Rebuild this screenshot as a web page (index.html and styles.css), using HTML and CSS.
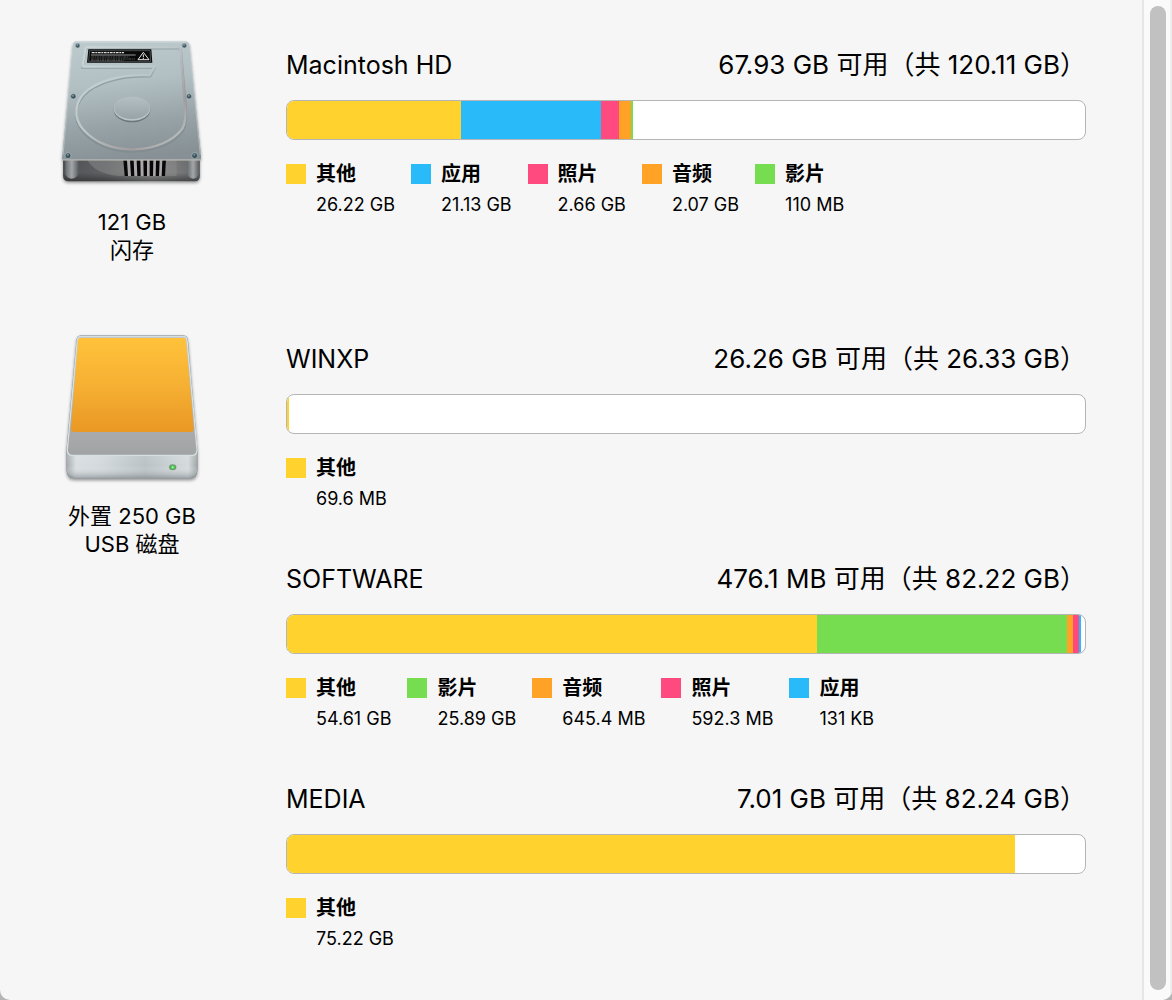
FILE: index.html
```html
<!DOCTYPE html>
<html lang="zh-CN">
<head>
    <meta charset="UTF-8">
    <meta name="viewport" content="width=device-width, initial-scale=1.0">
    <title>储存空间</title>
    <link rel="stylesheet" href="styles.css">
</head>
<body>

<div class="window">
    <main class="content">

        <section class="drive">
            <div class="drive-info">
                <svg class="drive-icon" viewBox="0 0 492 492" aria-hidden="true">
                    <defs>
                        <linearGradient id="hdTop" x1="0.3" y1="0" x2="0.45" y2="1">
                            <stop offset="0" stop-color="#bccace"/>
                            <stop offset="0.35" stop-color="#b2c0c4"/>
                            <stop offset="0.7" stop-color="#98a3a7"/>
                            <stop offset="1" stop-color="#879195"/>
                        </linearGradient>
                        <linearGradient id="hdFront" x1="0" y1="0" x2="1" y2="0">
                            <stop offset="0" stop-color="#55585b"/>
                            <stop offset="0.3" stop-color="#66696b"/>
                            <stop offset="0.65" stop-color="#9a9a9a"/>
                            <stop offset="1" stop-color="#6c6f72"/>
                        </linearGradient>
                        <linearGradient id="hdFrontShade" x1="0" y1="0" x2="0" y2="1">
                            <stop offset="0" stop-color="#222" stop-opacity="0.15"/>
                            <stop offset="0.6" stop-color="#222" stop-opacity="0.1"/>
                            <stop offset="1" stop-color="#222" stop-opacity="0.6"/>
                        </linearGradient>
                        <linearGradient id="hdPost" x1="0" y1="0" x2="1" y2="0">
                            <stop offset="0" stop-color="#696d70"/>
                            <stop offset="0.5" stop-color="#a3a7aa"/>
                            <stop offset="1" stop-color="#5c6063"/>
                        </linearGradient>
                        <linearGradient id="hdRidge" x1="0" y1="0" x2="1" y2="1">
                            <stop offset="0" stop-color="#ccd7da"/>
                            <stop offset="0.45" stop-color="#bcc7ca"/>
                            <stop offset="0.75" stop-color="#a39c9e"/>
                            <stop offset="1" stop-color="#c2cdd0"/>
                        </linearGradient>
                        <linearGradient id="hdHub" x1="0" y1="0" x2="0" y2="1">
                            <stop offset="0" stop-color="#b3bfc2"/>
                            <stop offset="1" stop-color="#98a3a7"/>
                        </linearGradient>
                        <filter id="shadow" x="-10%" y="-10%" width="120%" height="125%">
                            <feDropShadow dx="0" dy="5" stdDeviation="5" flood-color="#000" flood-opacity="0.4"/>
                        </filter>
                    </defs>
                    <g filter="url(#shadow)">
                        <path d="M39 388 H450 V436 Q450 454 434 454 H56 Q39 454 39 436 Z" fill="url(#hdFront)"/>
                        <path d="M80 34 H404 Q417 34 419 46 L453 374 Q454 390 450 390 H39 Q35 389 37 374 L68 46 Q70 34 80 34 Z" fill="url(#hdTop)"/>
                    </g>
                    <!-- front side with the vents -->
                    <path d="M39 390 H450 V436 Q450 454 434 454 H56 Q39 454 39 436 Z" fill="url(#hdFrontShade)"/>
                    <path d="M112 391 Q135 431 205 438 H380 V391 Z" fill="#898989" opacity="0.5"/>
                    <path d="M46 391 H85 V432 Q78 446 65 446 Q52 446 46 432 Z" fill="url(#hdPost)"/>
                    <path d="M412 391 H447 V432 Q441 446 430 446 Q418 446 412 432 Z" fill="url(#hdPost)"/>
                    <path d="M221 391 H348 L344 438 H225 Z" fill="#aaa8a8"/>
                    <path d="M220 391 h11 l3 47 h-10 Z M240 391 h11 l2 47 h-10 Z M260 391 h11 l1 47 h-10 Z M280 391 h11 v47 h-10 Z M299 391 h11 l-1 47 h-10 Z M318 391 h11 l-2 47 h-10 Z M337 391 h11 l-3 47 h-10 Z" fill="#080808"/>
                    <path d="M39 390 H451" stroke="#c8c6be" stroke-width="3"/>
                    <path d="M78 36 H406" stroke="#d9e3e6" stroke-width="2"/>
                    <path d="M69 48 L39 374 M418 48 L451 374" stroke="#c0cbcf" stroke-width="2" fill="none"/>
                    <!-- raised platter cover -->
                    <path d="M107 55 H389 M107 55 L97 113 H314 L301 139 C225 136 157 153 116 183 C74 215 66 268 99 305 C133 344 188 366 248 365 C317 364 373 340 399 302 C411 282 409 252 407 227 L392 55" fill="none" stroke="#7c888c" stroke-width="7" stroke-linejoin="round" opacity="0.6"/>
                    <path d="M107 52 H391 M97 110 H314 L299 136 C224 132 156 149 115 179 C73 211 67 262 101 300 C136 339 190 359 248 358 C315 357 370 333 397 296 C409 277 407 247 405 224 L391 52 M107 52 L97 110" fill="none" stroke="url(#hdRidge)" stroke-width="7" stroke-linejoin="round"/>
                    <ellipse cx="246" cy="240" rx="55" ry="37" fill="#6c777b"/>
                    <ellipse cx="246" cy="236" rx="55" ry="36" fill="#b9c4c7"/>
                    <ellipse cx="246" cy="234" rx="53" ry="33" fill="url(#hdHub)"/>
                    <!-- warning label -->
                    <path d="M115 58 H304 L307 98 H111 Z" fill="#080909"/>
                    <path d="M119 62 H300 L302 94 H116 Z" fill="none" stroke="#666" stroke-width="2"/>
                    <path d="M125 68 H222" stroke="#ddd" stroke-width="4" stroke-dasharray="9 2 5 2"/>
                    <path d="M123 75 H257" stroke="#ddd" stroke-width="2"/>
                    <path d="M124 81 H238 M123 87 H255 M123 91 H220" stroke="#777" stroke-width="2" stroke-dasharray="8 2 4 2"/>
                    <path d="M280 67 L264 89 H297 Z" fill="none" stroke="#e5e5e5" stroke-width="3"/>
                    <path d="M280 73 V82 M280 84 V87" stroke="#e5e5e5" stroke-width="3"/>
                    <!-- screws -->
                    <g fill="#3d535c" stroke="#b4c1c6" stroke-width="2">
                        <circle cx="83" cy="47" r="7"/>
                        <circle cx="403" cy="47" r="7"/>
                        <circle cx="70" cy="199" r="8"/>
                        <circle cx="417" cy="199" r="8"/>
                        <circle cx="54" cy="377" r="9"/>
                        <circle cx="434" cy="377" r="9"/>
                    </g>
                    <g fill="#7f979f">
                        <circle cx="82" cy="45" r="3"/>
                        <circle cx="402" cy="45" r="3"/>
                        <circle cx="69" cy="197" r="3"/>
                        <circle cx="416" cy="197" r="3"/>
                        <circle cx="53" cy="374" r="3"/>
                        <circle cx="433" cy="374" r="3"/>
                    </g>
                </svg>
                <p class="drive-label">121 GB<br>闪存</p>
            </div>

            <div class="volumes">
                <article class="volume">
                    <header class="volume-header">
                        <h2>Macintosh HD</h2>
                        <p>67.93 GB 可用（共 120.11 GB）</p>
                    </header>
                    <div class="bar">
                        <span class="other" style="width: 21.83%"></span>
                        <span class="apps" style="width: 17.54%"></span>
                        <span class="photos" style="width: 2.26%"></span>
                        <span class="audio" style="width: 1.5%"></span>
                        <span class="movies" style="width: 0.09%"></span>
                    </div>
                    <ul class="legend">
                        <li><i class="swatch other"></i><b>其他</b><span>26.22 GB</span></li>
                        <li><i class="swatch apps"></i><b>应用</b><span>21.13 GB</span></li>
                        <li><i class="swatch photos"></i><b>照片</b><span>2.66 GB</span></li>
                        <li><i class="swatch audio"></i><b>音频</b><span>2.07 GB</span></li>
                        <li><i class="swatch movies"></i><b>影片</b><span>110 MB</span></li>
                    </ul>
                </article>
            </div>
        </section>

        <section class="drive">
            <div class="drive-info">
                <svg class="drive-icon" viewBox="0 -3 492 492" aria-hidden="true">
                    <defs>
                        <linearGradient id="exTop" x1="0" y1="0" x2="0" y2="1">
                            <stop offset="0" stop-color="#c3c8ca"/>
                            <stop offset="0.8" stop-color="#a9abad"/>
                            <stop offset="1" stop-color="#a0a2a3"/>
                        </linearGradient>
                        <linearGradient id="exLabel" x1="0" y1="0" x2="0" y2="1">
                            <stop offset="0" stop-color="#ffc23a"/>
                            <stop offset="0.5" stop-color="#f6b033"/>
                            <stop offset="1" stop-color="#e99824"/>
                        </linearGradient>
                        <linearGradient id="exFront" x1="0" y1="0" x2="1" y2="0">
                            <stop offset="0" stop-color="#a2a9ac"/>
                            <stop offset="0.07" stop-color="#d8dee0"/>
                            <stop offset="0.25" stop-color="#d3d9dc"/>
                            <stop offset="0.6" stop-color="#bac2c6"/>
                            <stop offset="0.93" stop-color="#d5dbdd"/>
                            <stop offset="1" stop-color="#9da4a7"/>
                        </linearGradient>
                        <linearGradient id="exShade" x1="0" y1="0" x2="0" y2="1">
                            <stop offset="0" stop-color="#fff" stop-opacity="0.15"/>
                            <stop offset="0.6" stop-color="#fff" stop-opacity="0"/>
                            <stop offset="1" stop-color="#6f777b" stop-opacity="0.5"/>
                        </linearGradient>
                    </defs>
                    <path d="M92 31 H401 Q412 32 414 45 L443 374 V434 Q442 461 420 461 H74 Q50 461 49 434 V374 L79 45 Q81 32 92 31 Z" fill="#8c9396" filter="url(#shadow)"/>
                    <path d="M50 370 V432 Q52 458 75 458 H419 Q440 458 442 432 V370 Z" fill="url(#exFront)"/>
                    <path d="M50 370 V432 Q52 458 75 458 H419 Q440 458 442 432 V370 Z" fill="url(#exShade)"/>
                    <path d="M93 34 H400 Q409 34 411 45 L441 374 Q441 390 428 391 H65 Q52 390 52 374 L82 45 Q84 34 93 34 Z" fill="url(#exTop)" stroke="#d6e0e3" stroke-width="4"/>
                    <path d="M91 39 H400 Q407 39 408 46 L431 308 Q432 321 422 321 H72 Q62 321 63 308 L84 46 Q85 39 91 39 Z" fill="url(#exLabel)"/>
                    <ellipse cx="368" cy="427" rx="11" ry="9" fill="#6f9c73"/>
                    <circle cx="368" cy="427" r="6" fill="#3ed442"/>
                    <circle cx="368" cy="427" r="3" fill="#b5f7ae"/>
                </svg>
                <p class="drive-label">外置 250 GB<br>USB 磁盘</p>
            </div>

            <div class="volumes">
                <article class="volume">
                    <header class="volume-header">
                        <h2>WINXP</h2>
                        <p>26.26 GB 可用（共 26.33 GB）</p>
                    </header>
                    <div class="bar">
                        <span class="other" style="width: 0.26%"></span>
                    </div>
                    <ul class="legend">
                        <li><i class="swatch other"></i><b>其他</b><span>69.6 MB</span></li>
                    </ul>
                </article>

                <article class="volume">
                    <header class="volume-header">
                        <h2>SOFTWARE</h2>
                        <p>476.1 MB 可用（共 82.22 GB）</p>
                    </header>
                    <div class="bar">
                        <span class="other" style="width: 66.42%"></span>
                        <span class="movies" style="width: 31.33%"></span>
                        <span class="audio" style="width: 0.75%"></span>
                        <span class="photos" style="width: 0.75%"></span>
                        <span class="apps" style="width: 0.01%"></span>
                    </div>
                    <ul class="legend">
                        <li><i class="swatch other"></i><b>其他</b><span>54.61 GB</span></li>
                        <li><i class="swatch movies"></i><b>影片</b><span>25.89 GB</span></li>
                        <li><i class="swatch audio"></i><b>音频</b><span>645.4 MB</span></li>
                        <li><i class="swatch photos"></i><b>照片</b><span>592.3 MB</span></li>
                        <li><i class="swatch apps"></i><b>应用</b><span>131 KB</span></li>
                    </ul>
                </article>

                <article class="volume">
                    <header class="volume-header">
                        <h2>MEDIA</h2>
                        <p>7.01 GB 可用（共 82.24 GB）</p>
                    </header>
                    <div class="bar">
                        <span class="other" style="width: 91.23%"></span>
                    </div>
                    <ul class="legend">
                        <li><i class="swatch other"></i><b>其他</b><span>75.22 GB</span></li>
                    </ul>
                </article>
            </div>
        </section>

    </main>

    <div class="scrollbar"><div class="thumb"></div></div>
</div>

</body>
</html>
```
FILE: styles.css
```css
* {
    box-sizing: border-box;
}

body {
    margin: 0;
    background-color: #b4b4b4;
    color: #000;
    font-family: Inter, "Noto Sans CJK SC", sans-serif;
}

h2, p, ul {
    margin: 0;
    padding: 0;
    font-weight: normal;
}

.window {
    display: flex;
    min-height: 100vh;
    background-color: #f6f6f6;
    border-radius: 0 0 10px 10px;
    overflow: hidden;
}

.content {
    flex: 1;
    display: flex;
    flex-direction: column;
    gap: 60px;
    padding: 30px 56px 30px 32px;
}

.drive {
    display: grid;
    grid-template-columns: 200px 1fr;
    column-gap: 54px;
}

.drive-info {
    text-align: center;
}

.drive-icon {
    display: block;
    width: 164px;
    height: 164px;
    margin: 0 auto 14px;
}

.drive-label {
    font-size: 22px;
    line-height: 28px;
}

.volumes {
    display: flex;
    flex-direction: column;
    gap: 48px;
    padding-top: 20px;
}

.volume-header {
    display: flex;
    justify-content: space-between;
    margin-bottom: 20px;
    line-height: 30px;
}

.volume-header h2 {
    font-size: 25px;
}

.volume-header p {
    font-size: 26px;
}

.bar {
    display: flex;
    height: 40px;
    border: 1px solid #b5b5b5;
    border-radius: 8px;
    background-color: #fff;
    overflow: hidden;
}

.bar span {
    min-width: 2px;
}

.legend {
    display: flex;
    gap: 16px;
    margin-top: 20px;
    list-style: none;
}

.legend li {
    display: grid;
    grid-template-columns: 20px auto;
    grid-template-rows: 28px 34px;
    column-gap: 10px;
    align-items: center;
}

.legend b {
    font-size: 20px;
    line-height: 28px;
}

.legend span {
    grid-column: 2;
    font-size: 18px;
    line-height: 34px;
}

.swatch {
    width: 20px;
    height: 20px;
}

.other { background-color: #ffd22e; }
.apps { background-color: #29bbf9; }
.photos { background-color: #ff4a7f; }
.audio { background-color: #ffa226; }
.movies { background-color: #76dd51; }

.scrollbar {
    width: 30px;
    padding: 6px 4px 10px 6px;
    border-left: 2px solid #e6e6e6;
    border-right: 2px solid #ededed;
    background-color: #fafafa;
    display: flex;
}

.thumb {
    width: 16px;
    border-radius: 8px;
    background-color: #c1c1c1;
}
```
